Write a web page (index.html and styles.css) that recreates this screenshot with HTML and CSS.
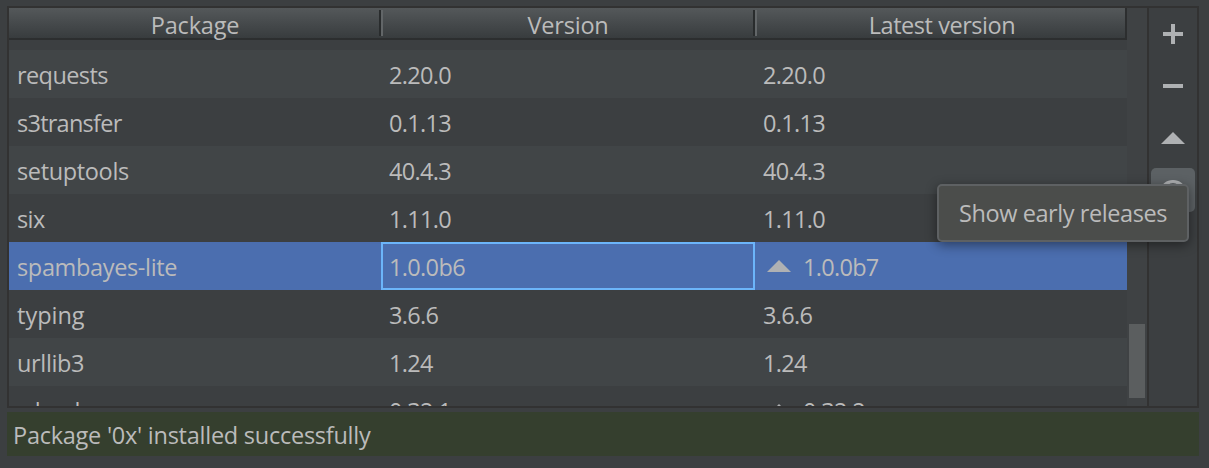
FILE: index.html
```html
<!DOCTYPE html>
<html lang="en">
<head>
<meta charset="utf-8">
<title>Packages</title>
<link rel="stylesheet" href="styles.css">
</head>
<body>
<main class="panel">
  <section class="frame">
    <div class="table">
      <div class="header">
        <div class="heading">Package</div>
        <div class="heading">Version</div>
        <div class="heading heading-last">Latest version</div>
      </div>
      <div class="rows">
        <div class="row row-cut"></div>
        <div class="row alt"><span class="name tight">requests</span><span class="num">2.20.0</span><span class="num">2.20.0</span></div>
        <div class="row"><span class="name tighter">s3transfer</span><span class="num">0.1.13</span><span class="num">0.1.13</span></div>
        <div class="row alt"><span class="name">setuptools</span><span class="num">40.4.3</span><span class="num">40.4.3</span></div>
        <div class="row"><span class="name tight">six</span><span class="num">1.11.0</span><span class="num">1.11.0</span></div>
        <div class="row selected"><span class="name">spambayes-lite</span><span class="num focused">1.0.0b6</span><span class="num upgrade"><svg class="arrow" viewBox="0 0 24 12"><path d="M0 12 12 0 24 12Z"/></svg>1.0.0b7</span></div>
        <div class="row"><span class="name loose">typing</span><span class="num">3.6.6</span><span class="num">3.6.6</span></div>
        <div class="row alt"><span class="name">urllib3</span><span class="num">1.24</span><span class="num">1.24</span></div>
        <div class="row row-last"><span class="name">wheel</span><span class="num">0.32.1</span><span class="num upgrade"><svg class="arrow" viewBox="0 0 24 12"><path d="M0 12 12 0 24 12Z"/></svg>0.32.2</span></div>
      </div>
    </div>
    <div class="scrollbar"><div class="thumb"></div></div>
    <div class="toolbar">
      <div class="tool"><svg viewBox="0 0 44 44"><path d="M12 20h8v-8h4v8h8v4h-8v8h-4v-8h-8z"/></svg></div>
      <div class="tool"><svg viewBox="0 0 44 44"><path d="M12 20h20v4H12z"/></svg></div>
      <div class="tool"><svg viewBox="0 0 44 44"><path d="M10 28 22 16 34 28Z"/></svg></div>
      <div class="tool hovered"><svg viewBox="0 0 44 44"><path fill-rule="evenodd" d="M22 12C15.5 12 11 16 8 22c3 6 7.500 10 14 10s11-4 14-10c-3-6-7.500-10-14-10zM22 15a7 7 0 1 1 0 14 7 7 0 0 1 0-14z"/><circle cx="22" cy="22" r="4"/></svg></div>
      <div class="tooltip">Show early releases</div>
    </div>
  </section>
  <div class="message">Package '0x' installed successfully</div>
</main>
</body>
</html>
```
FILE: styles.css
```css
* { box-sizing: border-box; }
body {
  margin: 0;
  height: 468px;
  overflow: hidden;
  background: #3c3f41;
  color: #bbbbbb;
  font: 23.5px/32px "Open Sans", "Noto Sans", sans-serif;
  white-space: nowrap;
}
svg { display: block; fill: #afb1b3; }
.panel {
  display: flex;
  flex-direction: column;
  gap: 4px;
  padding: 6px 10px 12px 7px;
}
.frame {
  display: flex;
  height: 402px;
  border: 2px solid #323232;
}
.table {
  display: flex;
  flex-direction: column;
  width: 1118px;
  overflow: hidden;
}
.header, .row {
  display: grid;
  grid-template-columns: 372px 374px 372px;
}
.header {
  flex: none;
  height: 32px;
  background: linear-gradient(#54585a, #383c3e);
  border-bottom: 2px solid #2c2e2f;
  border-right: 2px solid #2c2e2f;
}
.heading {
  height: 30px;
  padding-top: 1px;
  line-height: 32px;
  letter-spacing: -0.2px;
  text-align: center;
  background: linear-gradient(90deg, #292c2d 50%, #626668 50%) right -2px top 2px / 4px 26px no-repeat;
}
.heading + .heading {
  background: linear-gradient(#626668, #626668) 0 2px / 2px 26px no-repeat, linear-gradient(#292c2d, #292c2d) right 0 top 2px / 2px 26px no-repeat;
}
.heading.heading-last {
  padding-left: 2px;
  letter-spacing: -0.45px;
  background: linear-gradient(#626668, #626668) 0 2px / 2px 26px no-repeat;
}
.rows { flex: 1; min-height: 0; overflow: hidden; }
.row { height: 48px; background: #3c3f41; }
.row-cut { height: 10px; }
.row-last { height: 20px; overflow: hidden; }
.alt { background: #414547; }
.selected { background: #4b6eaf; }
.name, .num { display: flex; align-items: center; height: 48px; padding: 1px 8px 0; }
.name { letter-spacing: -0.35px; }
.tight { letter-spacing: -0.6px; }
.tighter { letter-spacing: -0.75px; }
.loose { letter-spacing: 0; }
.num { letter-spacing: -0.7px; }
.focused { border: 2px solid #6cb5fa; padding: 1px 6px 0; letter-spacing: -0.65px; }
.upgrade { gap: 12px; padding-left: 12px; }
.arrow { width: 24px; height: 12px; margin-top: -2px; }
.scrollbar { width: 20px; padding: 316px 2px 0; background: #3f4244; }
.thumb { height: 74px; background: #5b5e5f; }
.toolbar {
  position: relative;
  display: flex;
  flex-direction: column;
  gap: 8px;
  width: 50px;
  padding: 4px 2px;
  border-left: 2px solid #323232;
}
.tool { width: 44px; height: 44px; }
.hovered { background: #5c6164; border-radius: 5px; }
.tooltip {
  position: absolute;
  top: 176px;
  right: 8px;
  width: 252px;
  height: 58px;
  padding-top: 11px;
  letter-spacing: -0.42px;
  text-align: center;
  background: #4b4d4b;
  border: 2px solid #5e6163;
  border-radius: 5px;
  box-shadow: 0 3px 12px rgba(0, 0, 0, .45);
}
.message {
  height: 44px;
  padding: 7px 6px 0;
  letter-spacing: -0.25px;
  background: #353f2e;
}
```
